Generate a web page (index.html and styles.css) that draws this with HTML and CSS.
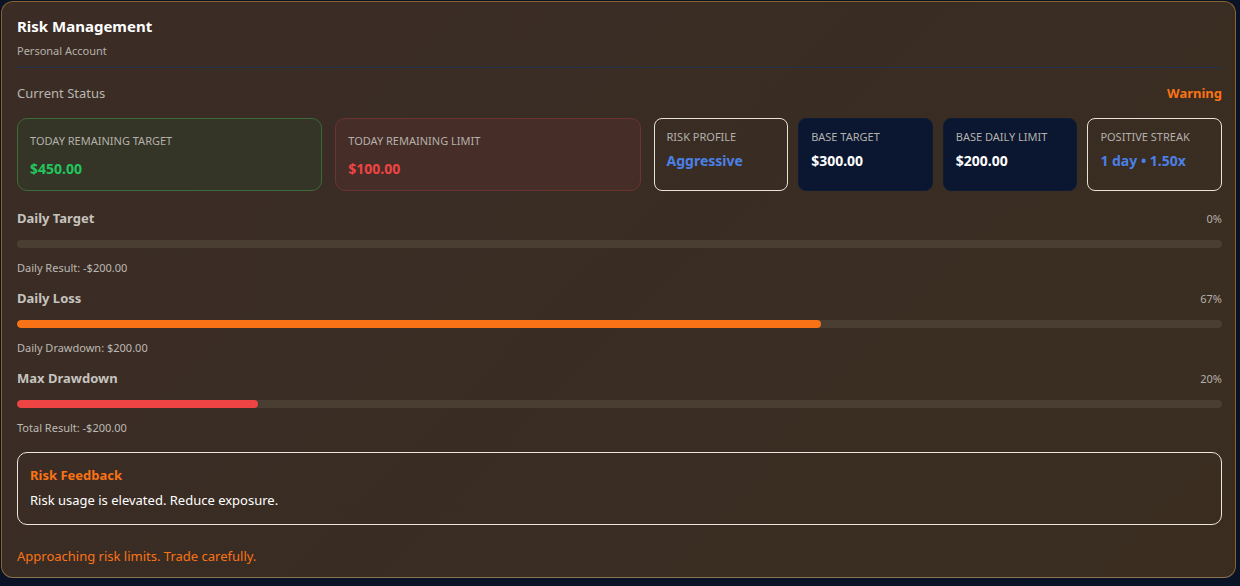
FILE: index.html
```html
<!DOCTYPE html>
<html lang="en">
<head>
<meta charset="utf-8">
<title>Risk Management</title>
<link rel="stylesheet" href="styles.css">
</head>
<body>
<div class="panel">
  <header class="head">
    <h1 class="title">Risk Management</h1>
    <div class="subtitle">Personal Account</div>
  </header>

  <div class="status-row">
    <span class="status-label">Current Status</span>
    <span class="status-value">Warning</span>
  </div>

  <div class="cards">
    <div class="big-card big-green">
      <div class="card-label">TODAY REMAINING TARGET</div>
      <div class="big-value green">$450.00</div>
    </div>
    <div class="big-card big-red">
      <div class="card-label">TODAY REMAINING LIMIT</div>
      <div class="big-value red">$100.00</div>
    </div>
    <div class="small-cards">
      <div class="small-card outlined">
        <div class="card-label">RISK PROFILE</div>
        <div class="small-value blue">Aggressive</div>
      </div>
      <div class="small-card navy">
        <div class="card-label">BASE TARGET</div>
        <div class="small-value white">$300.00</div>
      </div>
      <div class="small-card navy">
        <div class="card-label">BASE DAILY LIMIT</div>
        <div class="small-value white">$200.00</div>
      </div>
      <div class="small-card outlined">
        <div class="card-label">POSITIVE STREAK</div>
        <div class="small-value blue">1 day • 1.50x</div>
      </div>
    </div>
  </div>

  <div class="meters">
    <section class="meter">
      <div class="meter-head"><span class="meter-title">Daily Target</span><span class="meter-pct">0%</span></div>
      <div class="track"><div class="fill" style="width:0%"></div></div>
      <div class="meter-sub">Daily Result: -$200.00</div>
    </section>
    <section class="meter">
      <div class="meter-head"><span class="meter-title">Daily Loss</span><span class="meter-pct">67%</span></div>
      <div class="track"><div class="fill fill-orange" style="width:66.7%"></div></div>
      <div class="meter-sub">Daily Drawdown: $200.00</div>
    </section>
    <section class="meter">
      <div class="meter-head"><span class="meter-title">Max Drawdown</span><span class="meter-pct">20%</span></div>
      <div class="track"><div class="fill fill-red" style="width:20%"></div></div>
      <div class="meter-sub">Total Result: -$200.00</div>
    </section>
  </div>

  <div class="feedback">
    <div class="feedback-title">Risk Feedback</div>
    <div class="feedback-text">Risk usage is elevated. Reduce exposure.</div>
  </div>

  <div class="footer-note">Approaching risk limits. Trade carefully.</div>
</div>
</body>
</html>
```

FILE: styles.css
```css
* { box-sizing: border-box; }
html, body {
  margin: 0;
  padding: 0;
  height: 100%;
}
body {
  background: #0a1326;
  font-family: "Segoe UI", "Noto Sans", "Open Sans", sans-serif;
  color: #e5e5e5;
  padding: 1px 4px 0 1px;
}
.panel {
  height: 577px;
  background: linear-gradient(135deg, #3b2d26 0%, #392c23 50%, #3a2d20 100%);
  border: 1px solid #86632f;
  border-bottom-color: #8e7350;
  border-radius: 12px;
  padding: 14px 13px 12px 15px;
  display: flex;
  flex-direction: column;
}
.head {
  border-bottom: 1px solid #223149;
  padding-bottom: 8px;
}
.title {
  margin: 0;
  font-size: 15px;
  line-height: 20px;
  font-weight: 700;
  color: #ffffff;
}
.subtitle {
  margin-top: 7px;
  font-size: 11px;
  line-height: 16px;
  color: #b5b0aa;
}
.status-row {
  margin-top: 16px;
  display: flex;
  justify-content: space-between;
  align-items: center;
  line-height: 18px;
}
.status-label {
  font-size: 13px;
  color: #b9b5b0;
}
.status-value {
  font-size: 13px;
  font-weight: 700;
  color: #f97316;
}
.cards {
  margin-top: 16px;
  display: grid;
  grid-template-columns: 305fr 305fr 568fr;
  gap: 13px;
  height: 73px;
}
.big-card {
  border-radius: 10px;
  border: 1px solid;
  padding: 14px 12px 0 12px;
}
.big-green {
  background: #343526;
  border-color: #3c6a38;
}
.big-red {
  background: #472d27;
  border-color: #6b3431;
}
.card-label {
  font-size: 11px;
  line-height: 16px;
  color: #b4b0ab;
  letter-spacing: 0;
}
.big-value {
  margin-top: 11px;
  font-size: 14px;
  line-height: 18px;
  font-weight: 700;
}
.green { color: #22c55e; }
.red { color: #ef4444; }
.blue { color: #4b80e6; }
.white { color: #ffffff; }
.small-cards {
  display: grid;
  grid-template-columns: repeat(4, 1fr);
  gap: 10px;
}
.small-card {
  border-radius: 8px;
  padding: 10px 12px 0 12px;
  border: 1px solid transparent;
}
.outlined {
  border-color: #e9e2d6;
}
.navy {
  background: #0b1730;
  border-color: #0e1c36;
}
.small-value {
  margin-top: 7px;
  font-size: 14px;
  line-height: 18px;
  font-weight: 700;
}
.meters {
  margin-top: 18px;
  display: flex;
  flex-direction: column;
  gap: 13px;
}
.meter-head {
  display: flex;
  justify-content: space-between;
  align-items: center;
  height: 18px;
}
.meter-title {
  font-size: 13px;
  font-weight: 700;
  color: #c6c3bf;
}
.meter-pct {
  font-size: 11px;
  color: #b4b0ab;
}
.track {
  margin-top: 13px;
  height: 8px;
  border-radius: 4px;
  background: #4a3e33;
  overflow: hidden;
}
.fill {
  height: 100%;
  border-radius: 4px;
}
.fill-orange { background: #f97316; }
.fill-red { background: #ef4444; }
.meter-sub {
  margin-top: 12px;
  font-size: 11px;
  line-height: 16px;
  color: #bdb9b4;
}
.feedback {
  margin-top: 16px;
  border: 1px solid #ece6dc;
  border-radius: 10px;
  padding: 12px 12px 14px 12px;
}
.feedback-title {
  font-size: 13px;
  line-height: 20px;
  font-weight: 700;
  color: #f97316;
}
.feedback-text {
  margin-top: 5px;
  font-size: 13px;
  line-height: 20px;
  color: #ffffff;
}
.footer-note {
  margin-top: 22px;
  font-size: 13px;
  line-height: 18px;
  color: #f97316;
}
```
